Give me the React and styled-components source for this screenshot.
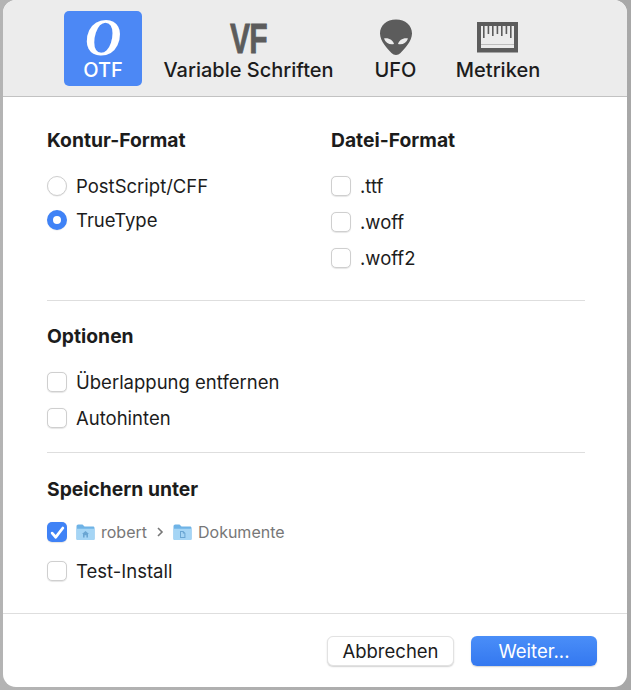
import React from "react";
import styled, { createGlobalStyle } from "styled-components";

const GlobalStyle = createGlobalStyle`
  html, body {
    margin: 0;
    padding: 0;
    background: #a9a9a9;
  }
  body {
    font-family: Inter, "Liberation Sans", sans-serif;
    color: #1c1c1c;
  }
`;

const Page = styled.div`
  width: 631px;
  height: 690px;
  overflow: hidden;
  padding: 0 4px 3px 3px;
  box-sizing: border-box;
  background: linear-gradient(90deg, #b4b4b4 0, #a8a8a8 100%);
`;

const Dialog = styled.div`
  height: 100%;
  display: flex;
  flex-direction: column;
  background: #fff;
  border-radius: 13px;
  overflow: hidden;
`;

const Toolbar = styled.div`
  height: 97px;
  flex: none;
  box-sizing: border-box;
  background: #ececec;
  border-bottom: 1px solid #c2c2c2;
  display: flex;
  align-items: flex-start;
  padding: 11px 0 0 61px;
`;

const Tab = styled.div`
  width: ${(p) => p.$width}px;
  height: 75px;
  margin-right: ${(p) => p.$gap}px;
  box-sizing: border-box;
  flex: none;
  border-radius: 5px;
  display: flex;
  flex-direction: column;
  align-items: center;
  justify-content: flex-end;
  padding-bottom: 5px;
  background: ${(p) => (p.$active ? "#4c88f5" : "transparent")};
  color: ${(p) => (p.$active ? "#fff" : "#1c1c1c")};
`;

const TabIcon = styled.div`
  height: 40px;
  margin-bottom: 2px;
  display: flex;
  align-items: center;
  justify-content: center;
`;

const TabLabel = styled.div`
  font-size: 20px;
  font-weight: 500;
  line-height: 22px;
  white-space: nowrap;
`;

const OtfGlyph = styled.span`
  display: block;
  font-family: "Liberation Serif", serif;
  font-style: italic;
  font-weight: 700;
  font-size: 53px;
  line-height: 40px;
  height: 40px;
  color: #fff;
  transform: scaleX(0.95);
`;

const VfGlyph = styled.span`
  display: block;
  font-family: "Liberation Sans", sans-serif;
  font-weight: 700;
  font-size: 43px;
  line-height: 42px;
  height: 40px;
  color: #5c5c5c;
  transform: scaleX(0.7);
  letter-spacing: -1px;
  -webkit-text-stroke: 0.8px #5c5c5c;
`;

const Content = styled.div`
  flex: 1;
  display: flex;
  flex-direction: column;
  padding: 0 42px 0 44px;
`;

const Columns = styled.div`
  display: grid;
  grid-template-columns: 284px 1fr;
  height: 204px;
  padding-top: 32px;
  box-sizing: border-box;
  border-bottom: 1px solid #dedede;
`;

const Section = styled.div`
  display: flex;
  flex-direction: column;
`;

const OptionsSection = styled(Section)`
  height: 152px;
  box-sizing: border-box;
  padding-top: 24px;
  border-bottom: 1px solid #dedede;
`;

const SaveSection = styled(Section)`
  height: 160px;
  box-sizing: border-box;
  padding-top: 25px;
`;

const Heading = styled.h3`
  margin: 0 0 ${(p) => p.$gap}px;
  font-size: 19.3px;
  line-height: 22px;
  font-weight: 700;
  color: #1c1c1c;
`;

const Row = styled.div`
  display: flex;
  align-items: center;
  height: ${(p) => p.$height || 36}px;
  gap: 9px;
  font-size: 18.5px;
  color: #1c1c1c;
`;

const Radio = styled.span`
  box-sizing: border-box;
  width: 20px;
  height: 20px;
  flex: none;
  border-radius: 50%;
  background: #fff;
  border: ${(p) => (p.$checked ? "6px solid #3f82f6" : "1px solid #cfcfcf")};
  box-shadow: 0 0.5px 1px rgba(0, 0, 0, 0.1);
`;

const Box = styled.span`
  box-sizing: border-box;
  width: 20px;
  height: 20px;
  flex: none;
  border-radius: 5px;
  display: flex;
  align-items: center;
  justify-content: center;
  background: ${(p) => (p.$checked ? "#3f82f6" : "#fff")};
  border: ${(p) => (p.$checked ? "none" : "1px solid #cfcfcf")};
  box-shadow: 0 0.5px 1px rgba(0, 0, 0, 0.1);
`;

const PathBar = styled.div`
  display: flex;
  align-items: center;
  gap: 6px;
  font-size: 16px;
  color: #777;
`;

const Chevron = styled.span`
  margin: 0 3px;
  display: flex;
`;

const Footer = styled.div`
  flex: 1;
  border-top: 1px solid #dedede;
  display: flex;
  justify-content: flex-end;
  align-items: flex-start;
  gap: 17px;
  padding: 22px 30px 0 0;
`;

const Button = styled.button`
  height: 30px;
  width: ${(p) => p.$width}px;
  padding: 0;
  border-radius: 6px;
  font-family: inherit;
  font-size: 18.5px;
  line-height: 27px;
  color: ${(p) => (p.$primary ? "#fff" : "#1c1c1c")};
  border: ${(p) => (p.$primary ? "none" : "1px solid #e2e2e2")};
  background: ${(p) =>
    p.$primary ? "linear-gradient(180deg, #4a8ef8 0%, #3478f0 100%)" : "#fff"};
  box-shadow: 0 1px 1.5px rgba(0, 0, 0, 0.18);
`;

function AlienIcon() {
  return (
    <svg width="34" height="37" viewBox="0 0 34 37">
      <path
        d="M17 0.5C7.5 0.5 1 6.5 1 14.5C1 22 8.5 30 12.5 34C15 36.6 19 36.6 21.5 34C25.5 30 33 22 33 14.5C33 6.5 26.5 0.5 17 0.5Z"
        fill="#5c5c5c"
      />
      <path d="M5 19.5C9.5 18.5 14 21 15 25C10.5 26 6.5 24 5 19.5Z" fill="#ececec" />
      <path d="M29 19.5C24.5 18.5 20 21 19 25C23.5 26 27.5 24 29 19.5Z" fill="#ececec" />
    </svg>
  );
}

function RulerIcon() {
  return (
    <svg width="42" height="31" viewBox="0 0 42 31">
      <rect x="0" y="0" width="41" height="30.5" fill="#5c5c5c" />
      <rect x="4" y="4" width="33" height="22" fill="#ececec" />
      <path
        d="M6 4h1.6v12H6zM10.6 4h1.6v8h-1.6zM15 4h1.6v10H15zM19.6 4h1.6v8h-1.6zM24 4h1.6v10H24zM28.6 4h1.6v8h-1.6zM33 4h1.6v12H33z"
        fill="#5c5c5c"
      />
      <rect x="4" y="22" width="33" height="1" fill="#bdbdbd" />
    </svg>
  );
}

function Check() {
  return (
    <svg width="15" height="15" viewBox="0 0 14 14">
      <path
        d="M2 7.6L5.4 11.4L12 2.8"
        fill="none"
        stroke="#fff"
        strokeWidth="2.6"
        strokeLinecap="round"
        strokeLinejoin="round"
      />
    </svg>
  );
}

function Folder({ home }) {
  return (
    <svg width="19" height="18" viewBox="0 0 19 17">
      <path d="M0.5 3C0.5 1.8 1.2 1 2.3 1H6.5L8.5 3H17C18 3 18.5 3.6 18.5 4.6V15C18.5 16 18 16.5 17 16.5H2C1 16.5 0.5 16 0.5 15Z" fill="#6fb3e6" />
      <path d="M0.5 5.2H18.5V15C18.5 16 18 16.5 17 16.5H2C1 16.5 0.5 16 0.5 15Z" fill="#a5d5f5" />
      {home ? (
        <path d="M9.5 7.5L13 10.6H12V14H10.4V11.8H8.6V14H7V10.6H6Z" fill="#6aa6d3" />
      ) : (
        <path d="M7 7.5H10.4L12.4 9.5V14.4H7ZM8 8.5V13.4H11.4V10H9.8V8.5Z" fill="#6aa6d3" />
      )}
    </svg>
  );
}

function Option({ label, checked }) {
  return (
    <Row>
      <Box $checked={checked}>{checked && <Check />}</Box>
      {label}
    </Row>
  );
}

export default function App() {
  return (
    <Page>
      <GlobalStyle />
      <Dialog>
        <Toolbar>
          <Tab $width={78} $gap={21} $active>
            <TabIcon>
              <OtfGlyph>O</OtfGlyph>
            </TabIcon>
            <TabLabel>OTF</TabLabel>
          </Tab>
          <Tab $width={171} $gap={41}>
            <TabIcon>
              <VfGlyph>VF</VfGlyph>
            </TabIcon>
            <TabLabel>Variable Schriften</TabLabel>
          </Tab>
          <Tab $width={41} $gap={40}>
            <TabIcon>
              <AlienIcon />
            </TabIcon>
            <TabLabel>UFO</TabLabel>
          </Tab>
          <Tab $width={84} $gap={0}>
            <TabIcon>
              <RulerIcon />
            </TabIcon>
            <TabLabel>Metriken</TabLabel>
          </Tab>
        </Toolbar>
        <Content>
          <Columns>
            <Section>
              <Heading $gap={18}>Kontur-Format</Heading>
              <Row $height={34}>
                <Radio />
                PostScript/CFF
              </Row>
              <Row $height={34}>
                <Radio $checked />
                TrueType
              </Row>
            </Section>
            <Section>
              <Heading $gap={17}>Datei-Format</Heading>
              <Option label=".ttf" />
              <Option label=".woff" />
              <Option label=".woff2" />
            </Section>
          </Columns>
          <OptionsSection>
            <Heading $gap={17}>Optionen</Heading>
            <Option label="Überlappung entfernen" />
            <Option label="Autohinten" />
          </OptionsSection>
          <SaveSection>
            <Heading $gap={11}>Speichern unter</Heading>
            <Row $height={42}>
              <Box $checked>
                <Check />
              </Box>
              <PathBar>
                <Folder home />
                robert
                <Chevron>
                  <svg width="8" height="10" viewBox="0 0 8 10">
                    <path d="M2 1L6 5L2 9" fill="none" stroke="#777" strokeWidth="1.6" />
                  </svg>
                </Chevron>
                <Folder />
                Dokumente
              </PathBar>
            </Row>
            <Option label="Test-Install" />
          </SaveSection>
        </Content>
        <Footer>
          <Button $width={127}>Abbrechen</Button>
          <Button $width={126} $primary>
            Weiter...
          </Button>
        </Footer>
      </Dialog>
    </Page>
  );
}
